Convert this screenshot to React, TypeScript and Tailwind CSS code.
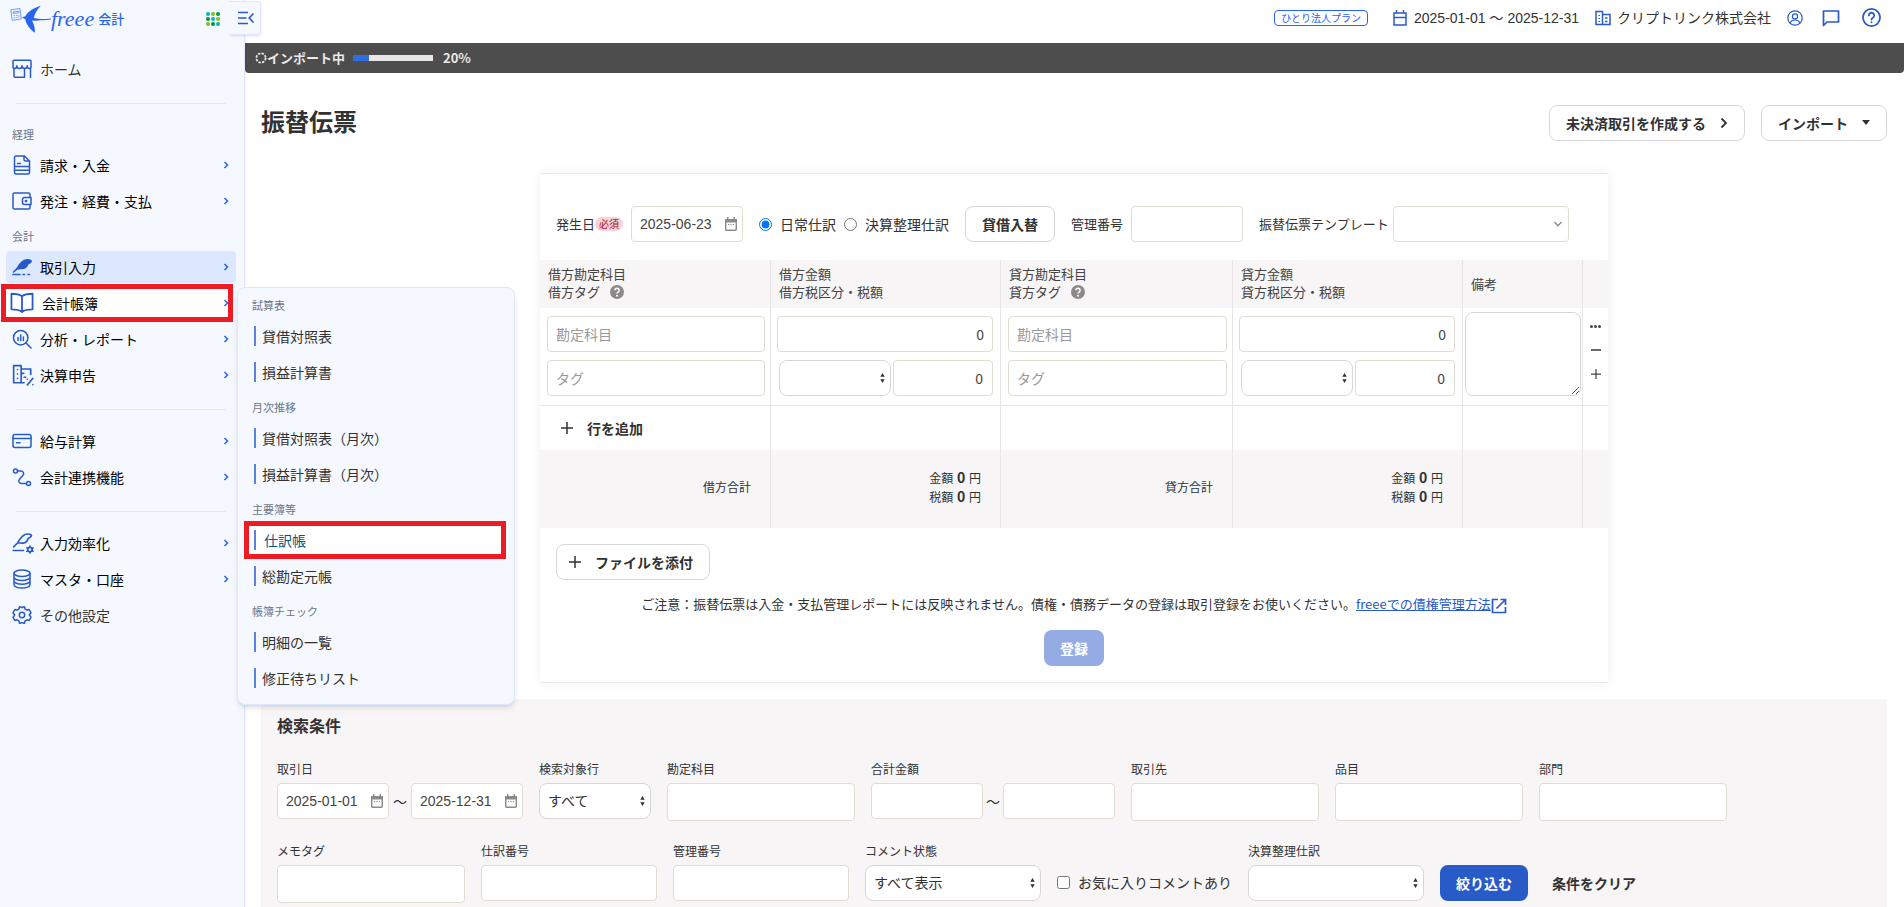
import { useId, useState } from "react";
import type { ReactNode } from "react";
import clsx from "clsx";

type NavItem = { label: string; icon: ReactNode; hasChildren?: boolean };
type MenuGroup = { title: string; items: string[] };

// ---------------------------------------------------------------------------
// Icons
// ---------------------------------------------------------------------------

function Icon({ children, className = "h-5 w-5" }: { children: ReactNode; className?: string }) {
  return (
    <svg
      viewBox="0 0 20 20"
      className={clsx("shrink-0", className)}
      fill="none"
      stroke="currentColor"
      strokeWidth="1.5"
      strokeLinecap="round"
      strokeLinejoin="round"
      aria-hidden="true"
    >
      {children}
    </svg>
  );
}

const icons = {
  home: (
    <Icon>
      <path d="M1 2.2a1 1 0 0 1 1-1h16a1 1 0 0 1 1 1V8c0 1-.6 1.500-1.500 1.500-1.500 0-2.300-1-2.300-2.800 0 1.800-1 2.800-2.600 2.800S10 8.500 10 6.700c0 1.800-1 2.800-2.600 2.800S4.800 8.500 4.800 6.700C4.800 8.500 4 9.500 2.500 9.500 1.600 9.500 1 9 1 8z" />
      <path d="M2 9.500v7.700a1 1 0 0 0 1 1h9.500V9.500M18.500 9.500v9" />
    </Icon>
  ),
  invoice: (
    <Icon>
      <path d="M12.500 1H4a1.500 1.500 0 0 0-1.500 1.500v15A1.500 1.500 0 0 0 4 19h12a1.500 1.500 0 0 0 1.500-1.500V6zM12 1v3.500A1.500 1.500 0 0 0 13.500 6h4" />
      <path d="M5.500 8.500h3M3 11.500h14M3 15.200h14" />
    </Icon>
  ),
  wallet: (
    <Icon>
      <path d="M18 6.500V3.500A1.500 1.500 0 0 0 16.500 2h-14A1.500 1.500 0 0 0 1 3.500v13A1.500 1.500 0 0 0 2.500 18h14a1.500 1.500 0 0 0 1.500-1.500v-3" />
      <path d="M12.500 6.500H19v7h-6.500a2 2 0 0 1-2-2v-3a2 2 0 0 1 2-2z" />
      <path d="M13.500 9.500h1v1h-1z" />
    </Icon>
  ),
  pen: (
    <Icon>
      <path d="M1.500 15 5 11.500C7.500 7 10.500 2.700 15.500 2.700c2 0 3.500.6 3.700 1.600-.8 1.400-2 2.200-3.500 2.700-.5 2-2 3.700-4.200 4.300-2 .5-4.500-.3-6.500.9z" fill="currentColor" />
      <path d="M1 17.500h7M11 17.500h1.500M16 17.500h1.500" />
    </Icon>
  ),
  book: (
    <Icon className="h-6 w-6">
      <path d="M10 4.500C8 2.800 5 2.300 1.200 2.300v13C5 15.300 8 15.800 10 17.500c2-1.700 5-2.200 8.800-2.200v-13C15 2.300 12 2.800 10 4.500zM10 4.500v13" />
    </Icon>
  ),
  report: (
    <Icon>
      <circle cx="8.700" cy="8.700" r="7.200" />
      <path d="m14 14 5 5M6 8.500v3M8.700 6v5.500M11.400 8v3.500" />
    </Icon>
  ),
  tax: (
    <Icon className="h-[22px] w-[22px]">
      <path d="M1.500 1.500h6.800V17H1.500zM8.300 4.500H17v5M8.300 8.500h2.500M11 12h1.500M5 5v.1M5 9v.1M5 13v.1M8.500 17H11M14 19l5-6M14 14v.1M19 18.800v.1" />
    </Icon>
  ),
  card: (
    <Icon>
      <rect x="1" y="3.500" width="18" height="13" rx="2" />
      <path d="M1 7.500h18M4.500 11.800h3.500" />
    </Icon>
  ),
  link: (
    <Icon>
      <circle cx="3.500" cy="4" r="2" />
      <circle cx="16.500" cy="16.500" r="2" />
      <path d="M5.500 4h3.500a2.600 2.600 0 0 1 2 4.300l-3.500 4a2.500 2.500 0 0 0 1.900 4.200h5" />
    </Icon>
  ),
  penCog: (
    <Icon className="h-[22px] w-[22px]">
      <path d="M1.500 13.500 5 10C7.500 5.500 10 1.800 14 1.800c2 0 3.500.6 3.700 1.600-.8 1.300-1.700 2-3 2.500-.5 2-1.700 3.500-3.900 4.100-2 .5-4.300-.3-5.800 0zM1 16.800h9.500" />
      <circle cx="16.300" cy="16" r="2" />
      <path d="M16.300 12.800v1M16.300 18.200v1M13.500 14.400l.9.500M18.200 17.100l.9.500M13.500 17.600l.9-.5M18.200 14.900l.9-.5" />
    </Icon>
  ),
  database: (
    <Icon>
      <ellipse cx="10" cy="4.200" rx="8" ry="3.200" />
      <path d="M2 4.200v11.600c0 1.800 3.600 3.200 8 3.200s8-1.400 8-3.200V4.200M2 8.200c0 1.800 3.600 3.200 8 3.200s8-1.400 8-3.200M2 12c0 1.800 3.600 3.200 8 3.200s8-1.400 8-3.200" />
    </Icon>
  ),
  gear: (
    <Icon>
      <circle cx="10" cy="10" r="2.700" />
      <path d="m7.500 1.800-.6 2.400-1.800 1-2.300-.7L1 7.800 2.700 10 1 12.200l1.800 3.300 2.300-.7 1.800 1 .6 2.400c1 .7 1.600-.8 2.500-.8s1.500 1.500 2.500.8l.6-2.400 1.800-1 2.300.7 1.800-3.300-1.700-2.200L19 7.800l-1.800-3.300-2.300.7-1.800-1-.6-2.400c-1-.7-1.600.8-2.500.8s-1.500-1.500-2.500-.8z" />
    </Icon>
  ),
};

function ChevronRight({ className }: { className?: string }) {
  return (
    <svg viewBox="0 0 8 8" className={clsx("h-2 w-2", className)} fill="none" stroke="currentColor" strokeWidth="1.5" aria-hidden="true">
      <path d="m2.500 1 3 3-3 3" />
    </svg>
  );
}

function PlusIcon({ className = "h-3 w-3" }: { className?: string }) {
  return (
    <svg viewBox="0 0 12 12" className={className} stroke="currentColor" strokeWidth="1.500" aria-hidden="true">
      <path d="M6 0v12M0 6h12" />
    </svg>
  );
}

function CalendarIcon() {
  return (
    <svg viewBox="0 0 12 14" className="h-3.5 w-3" fill="none" aria-hidden="true">
      <path d="M.7 2.700h10.600v9.600a1 1 0 0 1-1 1H1.700a1 1 0 0 1-1-1z" stroke="#8c8989" strokeWidth="1.400" />
      <path d="M0 2h12v3.500H0zM2 0h1.500v3H2zM8.500 0H10v3H8.500z" fill="#8c8989" />
      <path d="M3 7.500h1.200M5.400 7.500h1.200M7.800 7.500H9" stroke="#8c8989" />
    </svg>
  );
}

function HelpDot() {
  return (
    <svg viewBox="0 0 14 14" className="inline-block h-3.5 w-3.5" role="img" aria-label="ヘルプ">
      <circle cx="7" cy="7" r="7" fill="#8c8989" />
      <path d="M4.900 5.300a2.100 2.100 0 1 1 3.200 1.800C7.400 7.500 7 7.900 7 8.600" fill="none" stroke="#fff" strokeWidth="1.500" />
      <circle cx="7" cy="10.700" r="1" fill="#fff" />
    </svg>
  );
}

function Logo() {
  return (
    <a href="#home" className="flex items-center text-[#2864f0]" aria-label="freee 会計">
      <svg viewBox="0 0 41 32" className="h-8 w-[41px]" aria-hidden="true">
        <g fill="none" stroke="#6f9cf5">
          <path d="m.8 6.800 9.200-1.300 1.300 10.500L2.200 17.300z" />
          <path d="m3 9 5.800-.8.200 1.500-5.800.8zM3.500 12.700l1.500-.2M6 12.400l1.500-.2M3.800 15l1.500-.2M6.300 14.600l1.500-.2M8.900 12.200v2" />
        </g>
        <path
          d="M30.800 2.800C24.500 4.500 18 8.500 15.300 13.200L12 14.600l3.300 1.600C16.300 21.500 20 26.500 25 29.800c0-4.200-.8-8.300-3-12.300 3.500.6 6.700.2 9.800-.7l-8-1.900C24.500 10.500 27.500 6.500 30.800 2.800z"
          fill="currentColor"
        />
        <path d="M22 15.800c5 .8 12 1 19 .2" fill="none" stroke="currentColor" strokeWidth="1.200" />
      </svg>
      <span className="font-['Liberation_Serif',serif] text-[22px] leading-7 italic">freee</span>
      <span className="ml-1 text-[13px] leading-7 font-medium">会計</span>
    </a>
  );
}

// ---------------------------------------------------------------------------
// Sidebar
// ---------------------------------------------------------------------------

const ledgerMenu: MenuGroup[] = [
  { title: "試算表", items: ["貸借対照表", "損益計算書"] },
  { title: "月次推移", items: ["貸借対照表（月次）", "損益計算書（月次）"] },
  { title: "主要簿等", items: ["仕訳帳", "総勘定元帳"] },
  { title: "帳簿チェック", items: ["明細の一覧", "修正待ちリスト"] },
];

const bookkeeping: NavItem[] = [
  { label: "請求・入金", icon: icons.invoice, hasChildren: true },
  { label: "発注・経費・支払", icon: icons.wallet, hasChildren: true },
];

const accounting: NavItem[] = [
  { label: "取引入力", icon: icons.pen, hasChildren: true },
  { label: "会計帳簿", icon: icons.book, hasChildren: true },
  { label: "分析・レポート", icon: icons.report, hasChildren: true },
  { label: "決算申告", icon: icons.tax, hasChildren: true },
];

const payroll: NavItem[] = [
  { label: "給与計算", icon: icons.card, hasChildren: true },
  { label: "会計連携機能", icon: icons.link, hasChildren: true },
];

const settings: NavItem[] = [
  { label: "入力効率化", icon: icons.penCog, hasChildren: true },
  { label: "マスタ・口座", icon: icons.database, hasChildren: true },
  { label: "その他設定", icon: icons.gear },
];

function MenuTitle({ children }: { children: ReactNode }) {
  return <h3 className="py-[7px] text-[11px] leading-4 text-[#6e7686]">{children}</h3>;
}

function LedgerMenu() {
  return (
    <div className="absolute top-0 left-full z-20 ml-px w-[278px] rounded-lg border border-[#dce8ff] bg-[#f5f8ff] px-3.5 pt-0.5 pb-1.5 shadow-md">
      {ledgerMenu.map((group) => (
        <div key={group.title}>
          <MenuTitle>{group.title}</MenuTitle>
          <ul className="flex flex-col gap-1 pb-1">
            {group.items.map((item) => {
              const marked = item === "仕訳帳";
              return (
                <li key={item} className="relative">
                  {marked && (
                    <span className="absolute -inset-y-[3px] -right-1.5 -left-2 border-5 border-[#ed1c24] bg-white" />
                  )}
                  <a href="#report" className="relative flex h-8 items-center gap-1.5 pl-0.5">
                    <span className="h-5 w-0.5 bg-[#5a82dc]" />
                    <span className={clsx("text-sm", marked ? "pl-0.5 text-[#075985]" : "text-[#323232]")}>{item}</span>
                  </a>
                </li>
              );
            })}
          </ul>
        </div>
      ))}
    </div>
  );
}

function NavList({ items }: { items: NavItem[] }) {
  return (
    <ul className="flex flex-col gap-1 pb-1">
      {items.map(({ label, icon, hasChildren }) => {
        const open = label === "会計帳簿";
        return (
          <li key={label} className="relative">
            {open && (
              <span className="absolute -inset-y-[3px] right-[3px] -left-[5px] border-5 border-[#ed1c24] bg-white" />
            )}
            <a
              href="#nav"
              className={clsx(
                "relative flex h-8 items-center rounded px-1.5",
                label === "取引入力" && "bg-[#dce8ff]",
              )}
            >
              <span className="flex w-7 shrink-0 items-center text-[#285ac8]">
                <span className={clsx(open && "-mx-0.5")}>{icon}</span>
              </span>
              <span className={clsx("text-sm", open && "pl-0.5", hasChildren ? "text-black" : "text-[#323232]")}>
                {label}
              </span>
              {hasChildren && <ChevronRight className="ml-auto text-[#2864f0]" />}
            </a>
            {open && <LedgerMenu />}
          </li>
        );
      })}
    </ul>
  );
}

function NavDivider() {
  return <hr className="mx-2.5 mt-3.5 mb-[15px] border-[#dce8ff]" />;
}

const dotColors = ["#00b9b9", "#7dc31e", "#00963c", "#00963c", "#00b9b9", "#7dc31e", "#7dc31e", "#00963c", "#00b9b9"];

function Sidebar() {
  return (
    <aside className="relative z-10 w-[245px] shrink-0 border-r border-[#dce8ff] bg-[#f5f8ff] shadow-sm">
      <div className="flex h-[37px] items-center justify-between pr-6 pl-2.5">
        <Logo />
        <button type="button" aria-label="アプリ一覧" className="grid grid-cols-3 gap-px">
          {dotColors.map((c, i) => (
            <span key={i} className="h-1 w-1 rounded-full" style={{ backgroundColor: c }} />
          ))}
        </button>
      </div>
      <button
        type="button"
        aria-label="メニューを閉じる"
        className="absolute top-px -right-[17px] flex h-[34px] w-8 items-center rounded-r border border-l-0 border-[#dce8ff] bg-[#f5f8ff] pl-2 text-[#285ac8] shadow-sm [clip-path:inset(0_-4px_-4px_0)]"
      >
        <svg viewBox="0 0 18 14" className="h-3.5 w-[18px]" fill="none" stroke="currentColor" strokeWidth="1.600" aria-hidden="true">
          <path d="M1 1.500h10M1 7h8.500M1 12.500h10M16.500 2.500 12.200 7l4.300 4.500" />
        </svg>
      </button>

      <nav className="pt-4 pr-2 pl-1.5">
        <NavList items={[{ label: "ホーム", icon: icons.home }]} />
        <NavDivider />
        <div className="pl-1.5">
          <MenuTitle>経理</MenuTitle>
        </div>
        <NavList items={bookkeeping} />
        <div className="pl-1.5">
          <MenuTitle>会計</MenuTitle>
        </div>
        <NavList items={accounting} />
        <NavDivider />
        <NavList items={payroll} />
        <NavDivider />
        <NavList items={settings} />
      </nav>
    </aside>
  );
}

// ---------------------------------------------------------------------------
// Form controls
// ---------------------------------------------------------------------------

const fieldBase = "rounded border border-[#e1dcd2] bg-white text-sm text-[#464343] outline-none";
const latin = "font-['Liberation_Sans','Noto_Sans_CJK_JP',sans-serif]";

function DateInput({ id, label, value }: { id?: string; label?: string; value: string }) {
  return (
    <span className="relative block w-28">
      <input id={id} aria-label={label} defaultValue={value} className={clsx(fieldBase, latin, "h-9 w-full px-2")} />
      <span className="absolute top-[11px] right-1.5">
        <CalendarIcon />
      </span>
    </span>
  );
}

function Select({ label, id, className, options = [""] }: { label?: string; id?: string; className: string; options?: string[] }) {
  return (
    <span className={clsx("relative block shrink-0", className)}>
      <select
        id={id}
        aria-label={label}
        className="h-9 w-full appearance-none rounded-lg border border-[#d7d7d9] bg-white pr-5 pb-0.5 pl-2 text-sm text-[#323232]"
      >
        {options.map((o) => (
          <option key={o}>{o}</option>
        ))}
      </select>
      <svg viewBox="0 0 5 10" className="pointer-events-none absolute top-[13px] right-1.5 h-2.5 w-[5px]" fill="#323232" aria-hidden="true">
        <path d="M2.500 0 4.700 3.700H.3zM2.500 10 .3 6.300h4.400z" />
      </svg>
    </span>
  );
}

function Button({ children, className }: { children: ReactNode; className?: string }) {
  return (
    <button
      type="button"
      className={clsx(
        "flex h-9 items-center rounded-lg border border-[#d7d7d9] bg-white pb-px text-sm font-bold text-[#323232]",
        className,
      )}
    >
      {children}
    </button>
  );
}

// ---------------------------------------------------------------------------
// Header
// ---------------------------------------------------------------------------

function Header() {
  return (
    <header className="flex h-[43px] items-center justify-end pr-[23px] pb-2 text-sm text-[#323232]">
      <span className="mr-[25px] rounded border border-[#2864f0] px-1.5 text-[10px] leading-[14px] text-[#2864f0]">
        ひとり法人プラン
      </span>
      <button type="button" className={clsx("flex items-center", latin)}>
        <svg viewBox="0 0 14 16" className="mr-[7px] h-4 w-3.5 text-[#285ac8]" fill="none" stroke="currentColor" strokeWidth="1.500" aria-hidden="true">
          <path d="M1 3h12v12H1zM1 7.500h12M3.500 0v3M10.500 0v3" />
        </svg>
        2025-01-01 ～ 2025-12-31
      </button>
      <button type="button" className="ml-4 flex items-center">
        <svg viewBox="0 0 16 16" className="mr-1.5 h-4 w-4 text-[#285ac8]" fill="none" stroke="currentColor" strokeWidth="1.500" aria-hidden="true">
          <path d="M7.500 14.500H1v-13h6.500v3M7.500 4.500H15v10H7.500zM4.200 5v1M4.200 8v1M4.200 11v1M10 8h2.500M10 11.500h2.500" />
        </svg>
        <span className="pb-0.5">クリプトリンク株式会社</span>
      </button>
      <button type="button" aria-label="ユーザー" className="ml-4 text-[#285ac8]">
        <Icon className="h-4 w-4">
          <circle cx="10" cy="10" r="9" />
          <circle cx="10" cy="8" r="3.200" />
          <path d="M4 16c1.200-2.500 3.500-3.500 6-3.500s4.800 1 6 3.500" />
        </Icon>
      </button>
      <button type="button" aria-label="チャット" className="ml-[19px] text-[#285ac8]">
        <svg viewBox="0 0 18 18" className="h-[18px] w-[18px]" fill="none" stroke="currentColor" strokeWidth="1.700" aria-hidden="true">
          <path d="M1.500 2h15v11H5l-3.500 3.500z" strokeLinejoin="round" />
        </svg>
      </button>
      <button type="button" aria-label="ヘルプ" className="ml-[22px] text-[#285ac8]">
        <Icon className="h-[19px] w-[19px]">
          <circle cx="10" cy="10" r="9" strokeWidth="1.800" />
          <path d="M7.200 7.800a2.800 2.800 0 1 1 4.300 2.400c-1 .6-1.500 1-1.500 1.900M10 14.800v.2" strokeWidth="1.900" />
        </Icon>
      </button>
    </header>
  );
}

function ImportProgress({ percent }: { percent: number }) {
  return (
    <div className="flex h-[30px] items-center rounded-b bg-[#4d4d4d] pl-2.5 text-[13px] font-bold text-[#ebe9e9]">
      <svg viewBox="0 0 12 12" className="h-3 w-3" fill="none" stroke="currentColor" strokeWidth="1.800" aria-hidden="true">
        <circle cx="6" cy="6" r="4.600" strokeDasharray="2.400 1.210" />
      </svg>
      インポート中
      <span className="mr-2.5 ml-2 h-1.5 w-20 bg-[#e9e7e7]">
        <span className="block h-full bg-[#2e6ee1]" style={{ width: `${percent}%` }} />
      </span>
      {percent}%
    </div>
  );
}

// ---------------------------------------------------------------------------
// Transfer slip form
// ---------------------------------------------------------------------------

function SlipToolbar() {
  const [kind, setKind] = useState("daily");
  const ids = { date: useId(), number: useId(), template: useId() };

  return (
    <div className="flex items-center px-4 pt-8 pb-[18px] text-[13px] whitespace-nowrap text-[#323232]">
      <label htmlFor={ids.date}>発生日</label>
      <span className="mr-2 rounded-full bg-[#fad2d7] px-1 text-[10px] leading-[14px] text-[#a51428]">必須</span>
      <DateInput id={ids.date} value="2025-06-23" />
      <label className="ml-4 flex items-center gap-2 text-sm">
        <input
          type="radio"
          name="kind"
          className="h-[13px] w-[13px] accent-[#0075ff]"
          checked={kind === "daily"}
          onChange={() => setKind("daily")}
        />
        日常仕訳
      </label>
      <label className="ml-2 flex items-center gap-2 text-sm">
        <input
          type="radio"
          name="kind"
          className="h-[13px] w-[13px]"
          checked={kind === "closing"}
          onChange={() => setKind("closing")}
        />
        決算整理仕訳
      </label>
      <Button className="mx-4 px-4">貸借入替</Button>
      <label htmlFor={ids.number}>管理番号</label>
      <input id={ids.number} className={clsx(fieldBase, "mr-4 ml-2 h-9 w-28 px-2")} />
      <label htmlFor={ids.template}>振替伝票テンプレート</label>
      <span className="relative ml-1 w-44">
        <select id={ids.template} className={clsx(fieldBase, "block h-9 w-full appearance-none")}>
          <option></option>
        </select>
        <svg viewBox="0 0 8 6" className="pointer-events-none absolute top-[15px] right-[7px] h-1.5 w-2" fill="none" stroke="#8c8989" strokeWidth="1.400" aria-hidden="true">
          <path d="m.5 1 3.500 3.700L7.500 1" />
        </svg>
      </span>
    </div>
  );
}

const cellLine = "border-r border-[#e6e4e5]";

function AccountCell() {
  return (
    <td className={clsx(cellLine, "border-b pt-2 pr-[5px] pb-[9px] pl-[7px] align-top")}>
      <input aria-label="勘定科目" placeholder="勘定科目" className={clsx(fieldBase, "block h-9 w-full px-2 placeholder:text-[#9b9999]")} />
      <input aria-label="タグ" placeholder="タグ" className={clsx(fieldBase, "mt-2 block h-9 w-full px-2 placeholder:text-[#9b9999]")} />
    </td>
  );
}

function AmountCell() {
  return (
    <td className={clsx(cellLine, "border-b pt-2 pr-[7px] pb-[9px] pl-1.5 align-top")}>
      <input aria-label="金額" defaultValue="0" className={clsx(fieldBase, "block h-9 w-full px-2 text-right")} />
      <div className="mt-2 flex gap-0.5 pl-0.5">
        <Select label="税区分" className="w-28" />
        <input aria-label="税額" defaultValue="0" className={clsx(fieldBase, "h-9 w-full min-w-0 px-[9px] text-right")} />
      </div>
    </td>
  );
}

function TotalCell() {
  return (
    <td className={clsx(cellLine, "pr-[19px] pb-1 text-right leading-[19px]")}>
      {["金額", "税額"].map((t) => (
        <div key={t}>
          {t} <b className="mx-px text-sm leading-[19px]">0</b> 円
        </div>
      ))}
    </td>
  );
}

function SlipTable() {
  return (
    <table className="w-full table-fixed border-separate border-spacing-0 text-[#323232]">
      <colgroup>
        <col className="w-[231px]" />
        <col className="w-[230px]" />
        <col className="w-[232px]" />
        <col className="w-[230px]" />
        <col className="w-[120px]" />
        <col className="w-[25px]" />
      </colgroup>
      <thead>
        <tr className="h-12 bg-[#f7f5f6] text-left text-[13px] leading-[18px] text-[#464343]">
          {["借方", "貸方"].flatMap((side) => [
            <th key={side + "account"} className={clsx(cellLine, "pb-0.5 pl-2 font-normal")}>
              {side}勘定科目
              <div className="flex items-center gap-2.5">
                {side}タグ <HelpDot />
              </div>
            </th>,
            <th key={side + "amount"} className={clsx(cellLine, "pb-0.5 pl-2 font-normal")}>
              {side}金額
              <br />
              {side}税区分・税額
            </th>,
          ])}
          <th className={clsx(cellLine, "pl-2 font-normal")}>備考</th>
          <th />
        </tr>
      </thead>
      <tbody>
        <tr>
          <AccountCell />
          <AmountCell />
          <AccountCell />
          <AmountCell />
          <td className={clsx(cellLine, "border-b pt-1 pr-px pl-0.5 align-top")}>
            <textarea aria-label="備考" className="block h-[84px] w-full rounded-lg border border-[#d7d7d9] bg-white" />
          </td>
          <td className="border-b border-[#e6e4e5] pt-[11px] align-top text-[#464343]">
            <div className="flex flex-col items-center gap-2.5">
              <button type="button" aria-label="行メニュー" className="flex h-3.5 items-center gap-px">
                <span className="h-[3px] w-[3px] rounded-full bg-current" />
                <span className="h-[3px] w-[3px] rounded-full bg-current" />
                <span className="h-[3px] w-[3px] rounded-full bg-current" />
              </button>
              <button type="button" aria-label="行を削除" className="flex h-3.5 items-center">
                <span className="h-0.5 w-2.5 bg-[#6e6b6b]" />
              </button>
              <button type="button" aria-label="行を挿入" className="flex h-3.5 items-center">
                <PlusIcon className="h-2.5 w-2.5" />
              </button>
            </div>
          </td>
        </tr>
        <tr className="h-11">
          <td className={clsx(cellLine, "pl-[21px]")}>
            <button type="button" className="flex items-center gap-3.5 text-sm font-bold">
              <PlusIcon /> 行を追加
            </button>
          </td>
          <td className={cellLine} />
          <td className={cellLine} />
          <td className={cellLine} />
          <td className={cellLine} />
          <td />
        </tr>
      </tbody>
      <tfoot>
        <tr className="h-[78px] bg-[#f7f5f6] text-xs">
          <td className={clsx(cellLine, "pr-[19px] pb-1 text-right")}>借方合計</td>
          <TotalCell />
          <td className={clsx(cellLine, "pr-[19px] pb-1 text-right")}>貸方合計</td>
          <TotalCell />
          <td className={cellLine} />
          <td />
        </tr>
      </tfoot>
    </table>
  );
}

function SlipForm() {
  return (
    <section className="mx-auto mt-8 w-[1068px] max-w-full border-y border-[#ebebeb] bg-white shadow-[0_0_12px_rgba(0,0,0,0.06)]">
      <SlipToolbar />
      <SlipTable />
      <div className="px-4 py-4">
        <Button className="gap-3.5 pr-4 pl-3">
          <PlusIcon />
          ファイルを添付
        </Button>
        <p className="mt-3.5 flex h-5 items-center justify-center text-[13px] whitespace-nowrap text-[#323232]">
          ご注意：振替伝票は入金・支払管理レポートには反映されません。債権・債務データの登録は取引登録をお使いください。
          <a href="#help" className="flex items-center text-[#285ac8]">
            <span className="underline">freeeでの債権管理方法</span>
            <svg viewBox="0 0 16 16" className="mt-1 h-4 w-4" fill="none" stroke="currentColor" strokeWidth="1.700" aria-hidden="true">
              <path d="M7 1.500H1.500v13h13V9M9.500 1.500h5V7M14.500 1.500l-9 9" />
            </svg>
          </a>
        </p>
        <button type="submit" className="mx-auto mt-4 block h-9 w-[60px] rounded-lg bg-[#94abe3] pb-px text-sm font-bold text-white">
          登録
        </button>
      </div>
    </section>
  );
}

// ---------------------------------------------------------------------------
// Search conditions
// ---------------------------------------------------------------------------

const labelClass = "mb-1 block text-xs leading-5 text-[#323232]";

function TextField({ label, className }: { label: string; className: string }) {
  const id = useId();
  return (
    <div className="shrink-0">
      <label htmlFor={id} className={labelClass}>
        {label}
      </label>
      <input id={id} className={clsx(fieldBase, "block px-2", className)} />
    </div>
  );
}

function SelectField({ label, className, options }: { label: string; className: string; options?: string[] }) {
  const id = useId();
  return (
    <div className="shrink-0">
      <label htmlFor={id} className={labelClass}>
        {label}
      </label>
      <Select id={id} className={className} options={options} />
    </div>
  );
}

function SearchPanel() {
  return (
    <section className="mt-4 flex-1 bg-[#f7f5f6] px-4 pt-3.5 text-[#323232]">
      <h2 className="text-base leading-6 font-bold">検索条件</h2>

      <div className="mt-[22px] flex items-start gap-4">
        <fieldset className="shrink-0">
          <legend className={labelClass}>取引日</legend>
          <div className="flex items-center">
            <DateInput label="取引日（開始）" value="2025-01-01" />
            <span className="w-[22px] text-center text-sm">〜</span>
            <DateInput label="取引日（終了）" value="2025-12-31" />
          </div>
        </fieldset>
        <SelectField label="検索対象行" className="w-28" options={["すべて"]} />
        <TextField label="勘定科目" className="h-[38px] w-[188px]" />
        <fieldset className="shrink-0">
          <legend className={labelClass}>合計金額</legend>
          <div className="flex items-center">
            <input aria-label="合計金額（下限）" className={clsx(fieldBase, "h-9 w-28 px-2")} />
            <span className="w-5 text-center text-sm">〜</span>
            <input aria-label="合計金額（上限）" className={clsx(fieldBase, "h-9 w-28 px-2")} />
          </div>
        </fieldset>
        <TextField label="取引先" className="h-[38px] w-[188px]" />
        <TextField label="品目" className="h-[38px] w-[188px]" />
        <TextField label="部門" className="h-[38px] w-[188px]" />
      </div>

      <div className="mt-5 flex items-start gap-4">
        <TextField label="メモタグ" className="h-[38px] w-[188px]" />
        <TextField label="仕訳番号" className="h-9 w-44" />
        <TextField label="管理番号" className="h-9 w-44" />
        <SelectField label="コメント状態" className="w-44" options={["すべて表示"]} />
        <label className="mt-6 flex h-9 items-center gap-2 pb-0.5 text-sm whitespace-nowrap">
          <input type="checkbox" className="h-[13px] w-[13px]" />
          お気に入りコメントあり
        </label>
        <SelectField label="決算整理仕訳" className="w-44" />
        <button type="button" className="mt-6 h-9 rounded-lg bg-[#285ac8] px-4 pb-px text-sm font-bold text-white">
          絞り込む
        </button>
        <button type="button" className="mt-6 h-9 px-2 pb-px text-sm font-bold">
          条件をクリア
        </button>
      </div>
    </section>
  );
}

export default function App() {
  return (
    <div className="flex h-screen overflow-hidden bg-white font-['Noto_Sans_CJK_JP',sans-serif]">
      <Sidebar />
      <main className="flex min-w-0 flex-1 flex-col">
        <Header />
        <ImportProgress percent={20} />
        <div className="flex flex-1 flex-col pr-[17px] pl-4">
          <div className="mt-8 flex items-center justify-between">
            <h1 className="pb-1 text-2xl leading-8 font-bold text-[#323232]">振替伝票</h1>
            <div className="flex gap-4">
              <Button className="gap-3.5 px-4">
                未決済取引を作成する
                <svg viewBox="0 0 8 12" className="h-3 w-2" fill="none" stroke="currentColor" strokeWidth="1.800" aria-hidden="true">
                  <path d="m1.500 1.500 4.500 4.500-4.500 4.500" />
                </svg>
              </Button>
              <Button className="gap-3.5 px-4">
                インポート
                <svg viewBox="0 0 8 5" className="h-[5px] w-2" fill="currentColor" aria-hidden="true">
                  <path d="M0 0h8L4 5z" />
                </svg>
              </Button>
            </div>
          </div>
          <SlipForm />
          <SearchPanel />
        </div>
      </main>
    </div>
  );
}
